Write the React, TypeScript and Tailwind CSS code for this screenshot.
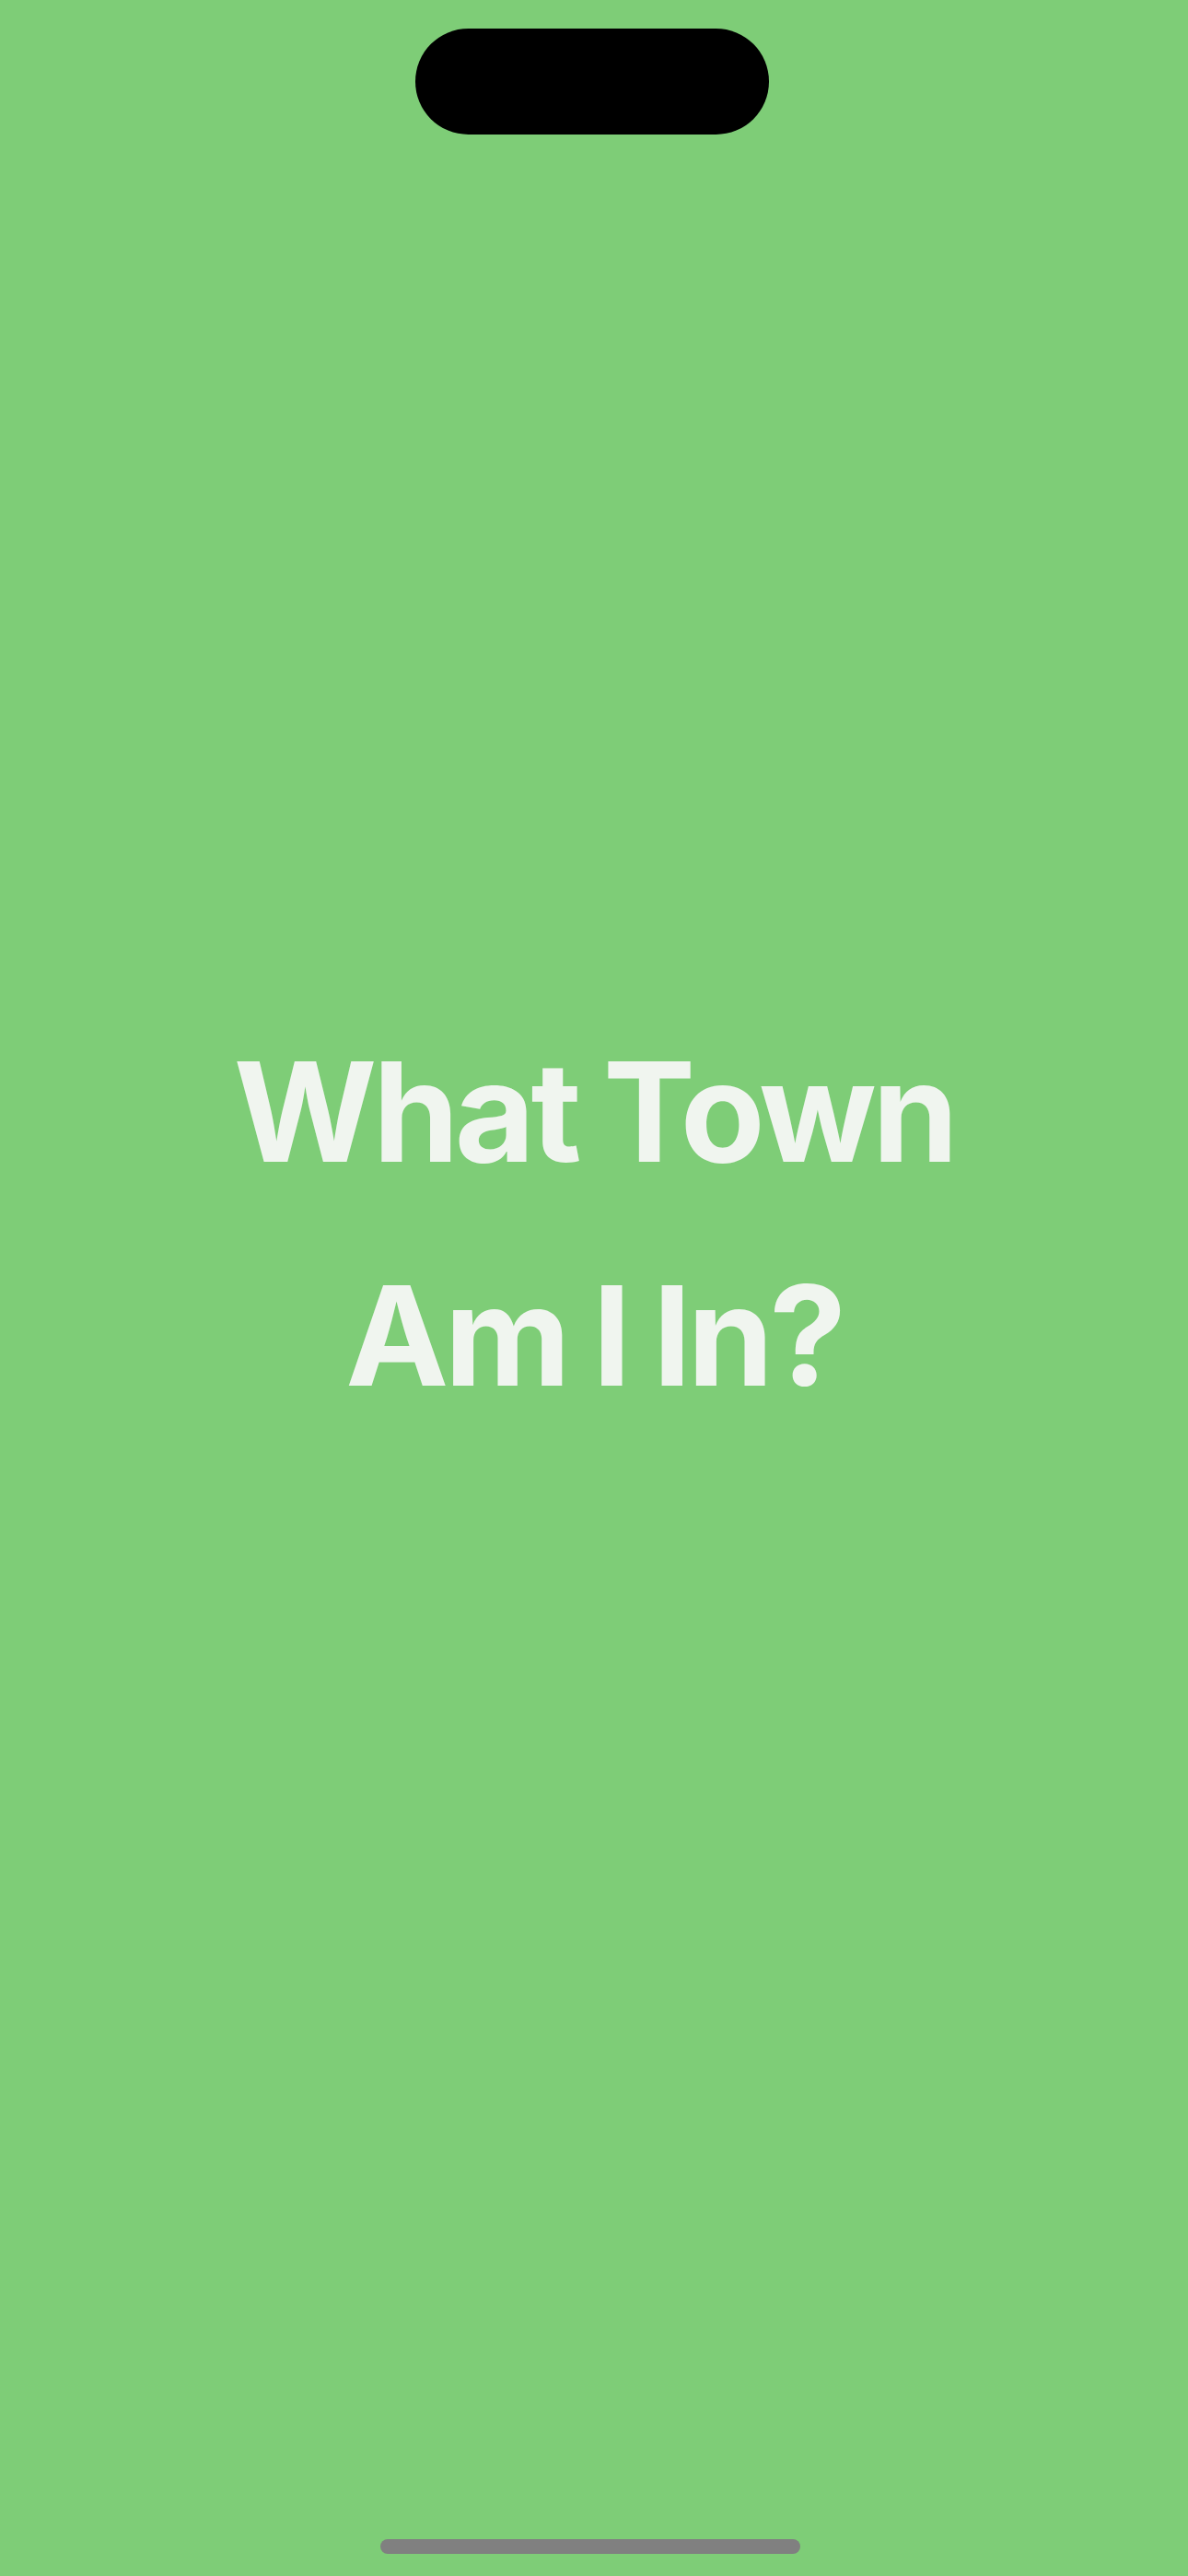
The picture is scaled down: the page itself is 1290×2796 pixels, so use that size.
import React from "react";

export default function App() {
  return (
    <div className="relative w-[1290px] h-[2796px] overflow-hidden bg-[#7ecd77]">
      <div className="absolute left-[451px] top-[31px] w-[384px] h-[115px] rounded-full bg-black" />
      <div className="flex flex-col items-center pt-[1085px]">
        <h1
          className="text-center text-[150px] leading-[243px] font-bold tracking-[-4.5px] [word-spacing:-3px] text-[#f0f5ef]"
          style={{ fontFamily: "Inter, 'Liberation Sans', sans-serif" }}
        >
          What Town
          <br />
          Am I In?
        </h1>
      </div>
      <div className="absolute left-[413px] top-[2756px] w-[456px] h-[16px] rounded-full bg-[#808080]" />
    </div>
  );
}
